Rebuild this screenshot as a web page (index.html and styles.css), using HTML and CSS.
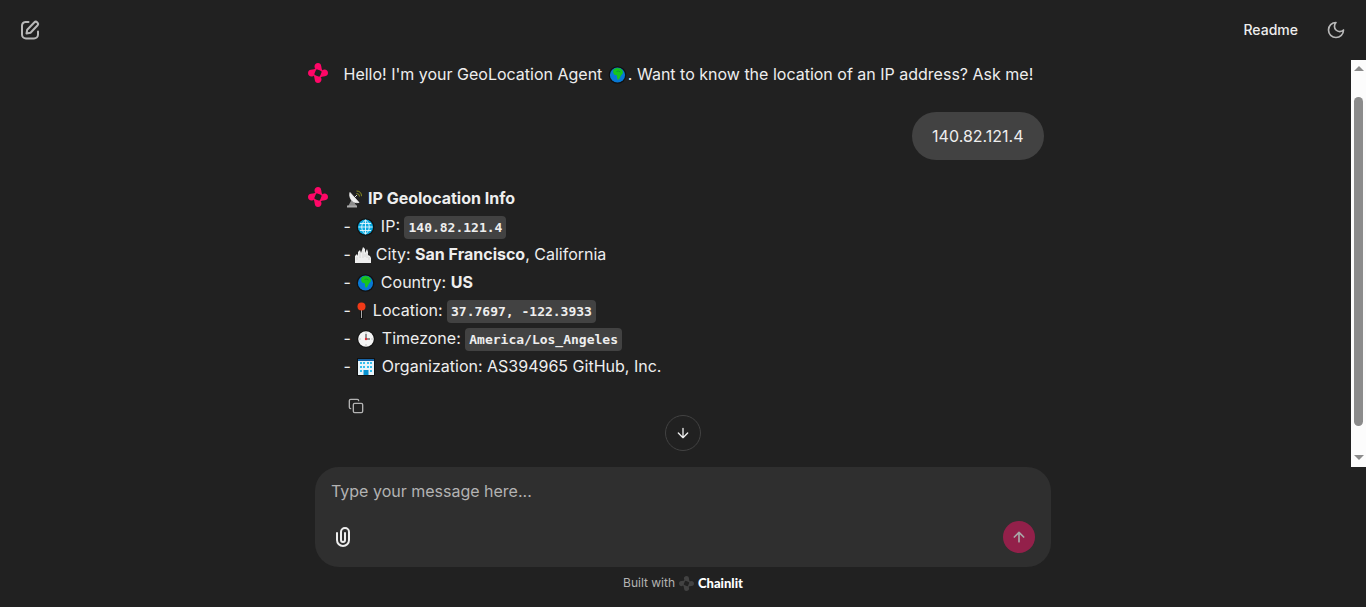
FILE: index.html
```html
<!DOCTYPE html>
<html lang="en">
<head>
<meta charset="utf-8">
<meta name="viewport" content="width=device-width, initial-scale=1">
<title>GeoLocation Agent</title>
<link rel="stylesheet" href="styles.css">
</head>
<body>
<svg class="defs" aria-hidden="true">
  <symbol id="logo" viewBox="0 0 20 20">
    <g fill="currentColor">
      <path id="petal" d="M10 0C11.800 0 13 1.200 13.200 3L13.800 6.200 15.200 8.200 14.200 9 12.200 7.600 8 6C7 5.400 6.500 4.500 6.500 3.400 6.500 1.500 8 0 10 0Z"/>
      <use href="#petal" transform="rotate(90 10 10)"/>
      <use href="#petal" transform="rotate(180 10 10)"/>
      <use href="#petal" transform="rotate(270 10 10)"/>
    </g>
  </symbol>
  <symbol id="earth" viewBox="0 0 18 18">
    <circle cx="9" cy="9" r="8.800" fill="#111"/>
    <circle cx="9" cy="9" r="7.600" fill="#0878d4"/>
    <path d="M5 3.500 8 2 12 2.500 14 4.500 14.500 7 12.500 9.500 11 12.500 9.500 14 8.500 12V9.500L5.500 8.500 4.500 6Z" fill="#18c51c"/>
    <path d="M8 5.500 10 5 12 6" stroke="#0c9b38" fill="none"/>
  </symbol>
</svg>
<div class="app">
  <header class="topbar">
    <button class="icon-btn" aria-label="New chat">
      <svg width="20" height="20" viewBox="0 0 20 20" fill="none" stroke="currentColor" stroke-width="2" stroke-linecap="round" stroke-linejoin="round"><path d="M8.500 2H5.500A4 4 0 0 0 2 6v8.500a4 4 0 0 0 4 4H14a4 4 0 0 0 4-4V11.500"/><path d="M6.500 13.500 7.200 9.800 14.200 2.500a2.100 2.100 0 0 1 3.200 3L10.500 12.700Z"/></svg>
    </button>
    <nav class="actions">
      <button class="readme">Readme</button>
      <button class="icon-btn" aria-label="Toggle theme">
        <svg width="20" height="20" viewBox="0 0 24 24" fill="none" stroke="currentColor" stroke-width="2" stroke-linecap="round" stroke-linejoin="round"><path d="M12 3a6 6 0 0 0 9 9 9 9 0 1 1-9-9Z"/></svg>
      </button>
    </nav>
  </header>
  <main class="chat">
    <div class="messages">
      <article class="message">
        <svg class="avatar" role="img" aria-label="Assistant"><use href="#logo"/></svg>
        <p class="text">Hello! I'm your GeoLocation Agent <svg class="emoji"><use href="#earth"/></svg>. Want to know the location of an IP address? Ask me!</p>
      </article>
      <article class="user-message">140.82.121.4</article>
      <article class="message">
        <svg class="avatar" role="img" aria-label="Assistant"><use href="#logo"/></svg>
        <div class="text">
          <div><svg class="emoji dish" viewBox="0 0 18 18"><path d="M3 16.500 7 9l5 7.500Z" fill="#8b8b8b"/><path d="M2 15.500h10v2H2Z" fill="#aaa"/><path d="M5 2.500C3.500 7 7 14 14 12.500Z" fill="#eee" stroke="#eee" stroke-width=".8"/><path d="M9 8 12 5" stroke="#ddd"/><path d="M11.500 3.500q3 0 3 3M11.500 1q5 .2 5 5.200" fill="none" stroke="#8a8b20"/></svg> <strong>IP Geolocation Info</strong></div>
          <div>- <svg class="emoji" viewBox="0 0 18 18"><circle cx="9" cy="9" r="8.800" fill="#111"/><circle cx="9" cy="9" r="7.600" fill="#0aa9df"/><path d="M9 2v14M2 9h14M3.500 5.500h11M3.500 12.500h11M9 2C4 5 4 13 9 16M9 2c5 3 5 11 0 14" stroke="#e5f7ff" stroke-width=".9" fill="none"/></svg> IP: <code>140.82.121.4</code></div>
          <div>- <svg class="emoji city" viewBox="0 0 16 18"><path d="M0 17V10l2-2 1 2V6l2-2 1 3 2-6 2 2v4l2-4 1 3v3l2 1 1 2v5Z" fill="#eee"/><path d="M2 11v3M5 7v5M8 5v7M10 8v3M12 7v5M14 11v3" stroke="#c8c8c8" stroke-width=".6"/></svg> City: <strong>San Francisco</strong>, California</div>
          <div>- <svg class="emoji"><use href="#earth"/></svg> Country: <strong>US</strong></div>
          <div>- <svg class="emoji pin" viewBox="0 0 13 18"><path d="M5 7h3v10H5Z" fill="#111"/><path d="M6.500 7v9" stroke="#aaa"/><circle cx="6.500" cy="4.500" r="4" fill="#f03a17"/></svg> Location: <code>37.7697, -122.3933</code></div>
          <div>- <svg class="emoji wide" viewBox="0 0 18 18"><circle cx="9" cy="9" r="8.800" fill="#111"/><circle cx="9" cy="9" r="7.800" fill="#f5f5f5"/><path d="M9 4v5h4" stroke="#333" fill="none"/><circle cx="9" cy="9" r="1.200" fill="#e12b34"/><path d="M9 2.500v1M9 14.500v1M2.500 9h1M14.500 9h1" stroke="#999"/></svg> Timezone: <code>America/Los_Angeles</code></div>
          <div>- <svg class="emoji wide" viewBox="0 0 18 18"><path d="M0 0h18v18H0Z" fill="#111"/><path d="M1 1h16v16H1Z" fill="#e9f4fa"/><path d="M1 1h16v2H1Z" fill="#1763a5"/><path d="M3 4h2v2H3Zm3 0h2v2H6Zm4 0h2v2h-2Zm3 0h2v2h-2ZM3 8h2v2H3Zm3 0h2v2H6Zm4 0h2v2h-2Zm3 0h2v2h-2ZM3 12h2v2H3Zm10 0h2v2h-2Z" fill="#35bfee"/><path d="M6.500 12h5v5h-5Z" fill="#0792d1"/></svg> Organization: AS394965 GitHub, Inc.</div>
          <button class="copy" aria-label="Copy">
            <svg width="16" height="16" viewBox="0 0 24 24" fill="none" stroke="currentColor" stroke-width="2" stroke-linecap="round" stroke-linejoin="round"><rect width="14" height="14" x="8" y="8" rx="2"/><path d="M4 16c-1.100 0-2-.9-2-2V4c0-1.100.9-2 2-2h10c1.100 0 2 .9 2 2"/></svg>
          </button>
        </div>
      </article>
    </div>
    <div class="scrollbar" aria-hidden="true"><span class="arrow up"></span><span class="thumb"></span><span class="arrow down"></span></div>
    <button class="to-bottom" aria-label="Scroll to bottom">
      <svg width="16" height="16" viewBox="0 0 24 24" fill="none" stroke="currentColor" stroke-width="2" stroke-linecap="round" stroke-linejoin="round"><path d="M12 5v14M19 12l-7 7-7-7"/></svg>
    </button>
  </main>
  <form class="composer">
    <textarea class="prompt" rows="1" placeholder="Type your message here..." aria-label="Message"></textarea>
    <div class="tools">
      <button type="button" class="attach" aria-label="Attach files">
        <svg width="24" height="24" viewBox="0 0 24 24" fill="none" stroke="currentColor" stroke-width="2" stroke-linecap="round"><path d="M6 8v7a6 6 0 0 0 12 0V7a4 4 0 0 0-8 0v8a2 2 0 0 0 4 0V8"/></svg>
      </button>
      <button type="submit" class="send" aria-label="Send">
        <svg width="16" height="16" viewBox="0 0 24 24" fill="none" stroke="currentColor" stroke-width="2.500" stroke-linecap="round" stroke-linejoin="round"><path d="m5 12 7-7 7 7M12 19V5"/></svg>
      </button>
    </div>
  </form>
  <footer class="credit"><a href="#">Built with <svg class="mark"><use href="#logo"/></svg> <b>Chainlit</b></a></footer>
</div>
</body>
</html>
```

FILE: styles.css
```css
* { box-sizing: border-box; }
body { margin: 0; background: #212121; color: #eee; font: 16px/28px Inter, sans-serif; }
button { font: inherit; color: inherit; background: none; border: 0; padding: 0; cursor: pointer; }
svg { flex: none; }
.defs { position: absolute; width: 0; height: 0; }
.app { display: flex; flex-direction: column; height: 100vh; }

.topbar { display: flex; align-items: center; justify-content: space-between; height: 60px; padding: 0 12px; }
.icon-btn { display: flex; align-items: center; justify-content: center; width: 36px; height: 36px; color: #b8b8b8; }
.actions { display: flex; align-items: center; gap: 4px; }
.readme { padding: 0 16px; font-size: 14px; font-weight: 500; line-height: 36px; }

.chat { position: relative; display: flex; flex: 1; min-height: 0; }
.messages { display: flex; flex-direction: column; gap: 24px; flex: 1; max-height: 100%; overflow: hidden; padding: 0 max(16px, calc((100% - 751px) / 2)); }
.message { display: flex; gap: 16px; }
.avatar { width: 20px; height: 20px; margin-top: 3px; color: #ff0767; }
.text { margin: 0; }
.user-message { align-self: flex-end; padding: 10px 20px; border-radius: 24px; background: #424242; }
.emoji { width: 21px; height: 18px; vertical-align: -4px; }
.emoji.wide { width: 22px; }
.emoji.dish { width: 20px; }
.emoji.city { width: 16px; }
.emoji.pin { width: 13px; }
code { display: inline-block; padding: 0 4px; border-radius: 4px; background: #424242; font: bold 13px/23px "DejaVu Sans Mono", monospace; }
.copy { display: flex; align-items: center; justify-content: center; width: 24px; height: 36px; margin-top: 8px; color: #b3b3b3; }

.scrollbar { display: flex; flex-direction: column; align-items: center; justify-content: space-between; width: 15px; padding: 6px 0 7px; background: #fcfcfc; }
.arrow { border: 5px solid transparent; border-top-width: 0; border-bottom: 5px solid #8b8b8b; }
.arrow.down { border-top: 5px solid #8b8b8b; border-bottom-width: 0; }
.thumb { flex: 1; width: 9px; margin: 26px 0 29px; border-radius: 5px; background: #8b8b8b; }
.to-bottom { position: absolute; left: 50%; bottom: 16px; display: flex; align-items: center; justify-content: center; width: 36px; height: 36px; transform: translateX(-50%); border: 1px solid #424242; border-radius: 50%; background: #212121; }

.composer { align-self: center; display: flex; flex-direction: column; justify-content: space-between; width: calc(100% - 32px); max-width: 736px; min-height: 100px; padding: 12px 16px 14px; border-radius: 24px; background: #2f2f2f; }
.prompt { width: 100%; padding: 0; border: 0; outline: 0; resize: none; background: none; color: #eee; font: 16px/24px Inter, sans-serif; }
.prompt::placeholder { color: #b3b3b3; }
.tools { display: flex; align-items: center; justify-content: space-between; }
.attach { display: flex; }
.send { display: flex; align-items: center; justify-content: center; width: 32px; height: 32px; border-radius: 50%; background: #93204a; color: #a8a8a8; }
.credit { height: 40px; padding-top: 6px; text-align: center; font-size: 12px; line-height: 20px; }
.credit a { display: inline-flex; align-items: center; gap: 4px; color: #b3b3b3; text-decoration: none; }
.credit b { color: #fff; font: 900 13px/20px Lato, sans-serif; }
.mark { width: 15px; height: 15px; color: #424242; }
```
